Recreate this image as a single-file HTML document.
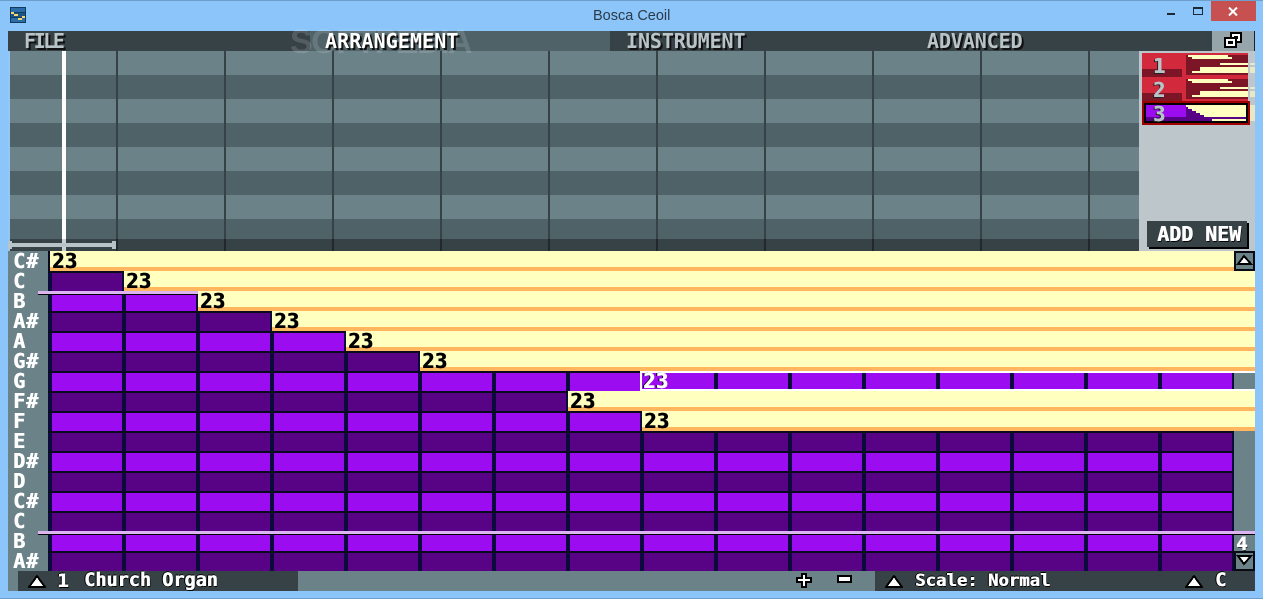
<!DOCTYPE html>
<html>
<head>
<meta charset="utf-8">
<title>Bosca Ceoil</title>
<style>
html,body{margin:0;padding:0;width:1263px;height:599px;overflow:hidden;background:#8bc5fa}
div,span,svg{position:absolute;display:block}
#bt{left:0;top:0;width:1263px;height:1px;background:#6e9fcc}
#bb{left:0;top:598px;width:1263px;height:1px;background:#6e9fcc}
#ttl{left:593px;top:7px;font:14.5px/18px "Liberation Sans",sans-serif;color:#2b3a48;white-space:nowrap}
.d{background:#374247}.l{background:#6b8289}
.t{font-family:"DejaVu Sans Mono","Liberation Mono",monospace;font-weight:bold;white-space:nowrap;line-height:20px}
.m{top:31px;font-size:20px;color:#b9c4c9;text-shadow:2px 2px 0 #111}
.k{left:13px;font-size:20px;color:#fff;letter-spacing:1px;text-shadow:.6px 0 0 #fff}
.n{font-size:20px;color:#000;letter-spacing:.6px;text-shadow:1px 0 0 #000}
.v{width:2px;top:51px;height:200px;background:linear-gradient(#374247 0 188px,#22282b 188px)}
.r{left:48px;width:1186px;height:18px}
.b{background:repeating-linear-gradient(90deg,#0a0a3c 0 4px,#9c0cf0 4px 74px)}
.p{background:repeating-linear-gradient(90deg,#0a0a3c 0 4px,#580385 4px 74px)}
.y{height:16px;background:#ffffbf;border-bottom:4px solid #ffb65f;right:8px}
.w{color:#fff;text-shadow:1px 0 0 #fff,-1px 0 0 #000}
.pb{background:#ffffbf}
.s{left:1250px;width:5px;background:#e8e8c4}
.bw{color:#fff;font-size:18.5px;text-shadow:.6px 0 0 #fff,1px 1px 0 #000,-1px 0 0 #000,0 -1px 0 #000}
.pn{left:1153px;font-size:20px;color:#b9c4c9;text-shadow:.6px 0 0 #b9c4c9,-1px 1px 0 #222}
</style>
</head>
<body>
<div id="bt"></div><div id="bb"></div>
<svg style="left:10px;top:7px" width="16" height="16" viewBox="0 0 16 16" shape-rendering="crispEdges"><rect width="16" height="16" fill="#123a5c"/><rect x="1" y="1" width="14" height="4" fill="#2a6da8"/><rect x="1" y="6" width="14" height="4" fill="#1d5587"/><rect x="1" y="11" width="14" height="4" fill="#2a6da8"/><rect x="1" y="5" width="3" height="2" fill="#f5d76e"/><rect x="4" y="7" width="4" height="2" fill="#f5d76e"/><rect x="8" y="11" width="4" height="2" fill="#f5d76e"/><rect x="12" y="9" width="3" height="2" fill="#f5d76e"/></svg>
<div id="ttl">Bosca Ceoil</div>
<div style="left:1167px;top:13px;width:8px;height:2px;background:#1c2a38"></div>
<div style="left:1193px;top:7px;width:8px;height:5px;border:1px solid #1c2a38;border-top-width:2px"></div>
<div style="left:1211px;top:1px;width:45px;height:20px;background:#c75050"></div>
<svg style="left:1228px;top:7px" width="10" height="9" viewBox="0 0 10 9"><path d="M1 0.5L9 8.5M9 0.5L1 8.5" stroke="#fff" stroke-width="2" fill="none"/></svg>

<div class="d" style="left:8px;top:31px;width:1247px;height:20px"></div>
<div style="left:310px;top:31px;width:300px;height:20px;background:#4f6268"></div>
<div style="left:1212px;top:31px;width:42px;height:20px;background:#96a5a9"></div>
<div style="left:1254px;top:31px;width:1px;height:20px;background:#222"></div>
<svg style="left:1224px;top:32px" width="18" height="16" viewBox="0 0 18 16" shape-rendering="crispEdges"><rect x="6" y="0" width="12" height="11" fill="#000"/><rect x="8" y="2" width="8" height="7" fill="#fff"/><rect x="10" y="4" width="4" height="3" fill="#000"/><rect x="0" y="5" width="13" height="11" fill="#000"/><rect x="2" y="7" width="9" height="7" fill="#fff"/><rect x="4" y="9" width="5" height="3" fill="#000"/></svg>

<div style="left:10px;top:51px;width:1129px;height:200px;background:repeating-linear-gradient(#6b8289 0 24px,#4f6268 24px 48px)"></div>
<div style="left:10px;top:239px;width:1129px;height:12px;background:#374247"></div>
<div style="left:8px;top:51px;width:2px;height:200px;background:#93c8f6"></div>
<div class="v" style="left:116px"></div><div class="v" style="left:224px"></div><div class="v" style="left:332px"></div><div class="v" style="left:440px"></div><div class="v" style="left:548px"></div><div class="v" style="left:656px"></div><div class="v" style="left:764px"></div><div class="v" style="left:872px"></div><div class="v" style="left:980px"></div><div class="v" style="left:1088px"></div>
<div style="left:62px;top:51px;width:4px;height:200px;background:linear-gradient(#fff 0 188px,#c7d0d4 188px)"></div>
<div style="left:8px;top:243px;width:108px;height:4px;background:#b9c4c9"></div>
<div style="left:8px;top:241px;width:4px;height:8px;background:#b9c4c9"></div>
<div style="left:112px;top:241px;width:4px;height:8px;background:#b9c4c9"></div>

<div style="left:290px;top:25px;font:bold 34px/34px 'Liberation Sans',sans-serif;color:rgba(255,255,255,.14);white-space:nowrap;letter-spacing:-1.5px">SOFTPEDIA</div>
<div class="t m" style="left:24px;letter-spacing:-2.4px">FILE</div>
<div class="t m" style="left:325px;color:#fff;letter-spacing:.1px">ARRANGEMENT</div>
<div class="t m" style="left:626px;letter-spacing:-.1px">INSTRUMENT</div>
<div class="t m" style="left:927px;letter-spacing:-.1px">ADVANCED</div>

<div style="left:1139px;top:51px;width:116px;height:200px;background:#bcc6cb"></div>
<div class="s" style="top:63px;height:2px"></div><div class="s" style="top:67px;height:6px"></div><div class="s" style="top:87px;height:2px"></div><div class="s" style="top:91px;height:6px"></div><div class="s" style="top:105px;height:16px"></div>

<div style="left:1142px;top:53px;width:106px;height:48px;background:#d22a3c"></div>
<div style="left:1142px;top:69px;width:40px;height:8px;background:#7c1525"></div>
<div style="left:1142px;top:93px;width:40px;height:8px;background:#7c1525"></div>
<div style="left:1186px;top:55px;width:62px;height:20px;background:#7c1525"></div>
<div style="left:1186px;top:79px;width:62px;height:20px;background:#7c1525"></div>
<div class="pb" style="left:1188px;top:55px;width:40px;height:2px"></div><div class="pb" style="left:1192px;top:57px;width:40px;height:2px"></div><div class="pb" style="left:1220px;top:63px;width:28px;height:2px"></div><div class="pb" style="left:1200px;top:67px;width:48px;height:4px"></div><div class="pb" style="left:1192px;top:71px;width:56px;height:2px"></div>
<div class="pb" style="left:1188px;top:79px;width:40px;height:2px"></div><div class="pb" style="left:1192px;top:81px;width:40px;height:2px"></div><div class="pb" style="left:1220px;top:87px;width:28px;height:2px"></div><div class="pb" style="left:1200px;top:91px;width:48px;height:4px"></div><div class="pb" style="left:1192px;top:95px;width:56px;height:2px"></div>
<div style="left:1142px;top:101px;width:108px;height:24px;background:#a00000"></div>
<div style="left:1144px;top:103px;width:104px;height:20px;background:#000"></div>
<div style="left:1146px;top:105px;width:100px;height:16px;background:#9c0cf0"></div>
<div style="left:1146px;top:117px;width:40px;height:4px;background:#580385"></div>
<svg style="left:1186px;top:105px" width="60" height="16" viewBox="0 0 60 16" shape-rendering="crispEdges"><rect width="60" height="16" fill="#ffffbf"/><path d="M0 2H2V4H6V6H10V8H14V10H18V12H60V14H26V16H0Z" fill="#580385"/></svg>
<div class="t pn" style="top:56px">1</div>
<div class="t pn" style="top:80px">2</div>
<div class="t pn" style="top:104px">3</div>

<div style="left:1149px;top:223px;width:100px;height:26px;background:#000"></div>
<div class="d" style="left:1147px;top:221px;width:100px;height:26px"></div>
<div class="t" style="left:1157px;top:224px;font-size:20px;color:#fff;text-shadow:.6px 0 0 #fff,1px 1px 0 #000;letter-spacing:-.05px">ADD NEW</div>

<div class="l" style="left:8px;top:251px;width:40px;height:320px"></div>
<div class="l" style="left:1234px;top:251px;width:21px;height:300px"></div>
<div style="left:48px;top:251px;width:1186px;height:320px;background:#0a0a1e"></div>
<div class="r p" style="top:273px"></div><div class="r b" style="top:293px"></div><div class="r p" style="top:313px"></div><div class="r b" style="top:333px"></div><div class="r p" style="top:353px"></div><div class="r b" style="top:373px"></div><div class="r p" style="top:393px"></div><div class="r b" style="top:413px"></div><div class="r p" style="top:433px"></div><div class="r b" style="top:453px"></div><div class="r p" style="top:473px"></div><div class="r b" style="top:493px"></div><div class="r p" style="top:513px"></div><div class="r b" style="top:533px"></div><div class="r p" style="top:553px"></div>

<div style="left:38px;top:291px;width:160px;height:3px;background:#dcb4f2"></div>
<div style="left:38px;top:294px;width:160px;height:1px;background:#000"></div>
<div style="left:38px;top:531px;width:1217px;height:3px;background:#dcb4f2"></div>
<div style="left:38px;top:534px;width:1217px;height:1px;background:#000"></div>

<div class="y" style="left:50px;top:251px"></div>
<div class="y" style="left:124px;top:271px"></div>
<div class="y" style="left:198px;top:291px"></div>
<div class="y" style="left:272px;top:311px"></div>
<div class="y" style="left:346px;top:331px"></div>
<div class="y" style="left:420px;top:351px"></div>
<div class="y" style="left:568px;top:391px"></div>
<div class="y" style="left:642px;top:411px"></div>
<div style="left:640px;top:371px;width:615px;height:2px;background:#fff"></div>
<div style="left:640px;top:389px;width:615px;height:2px;background:#fff"></div>
<div style="left:640px;top:371px;width:2px;height:20px;background:#fff"></div>
<div style="left:642px;top:373px;width:72px;height:16px;background:#9c0cf0"></div>
<div class="l" style="left:1234px;top:373px;width:21px;height:16px"></div>

<div class="t n" style="left:52px;top:251px">23</div>
<div class="t n" style="left:126px;top:271px">23</div>
<div class="t n" style="left:200px;top:291px">23</div>
<div class="t n" style="left:274px;top:311px">23</div>
<div class="t n" style="left:348px;top:331px">23</div>
<div class="t n" style="left:422px;top:351px">23</div>
<div class="t n w" style="left:643px;top:371px">23</div>
<div class="t n" style="left:570px;top:391px">23</div>
<div class="t n" style="left:644px;top:411px">23</div>

<div class="t k" style="top:251px">C#</div><div class="t k" style="top:271px">C</div><div class="t k" style="top:291px">B</div><div class="t k" style="top:311px">A#</div><div class="t k" style="top:331px">A</div><div class="t k" style="top:351px">G#</div><div class="t k" style="top:371px">G</div><div class="t k" style="top:391px">F#</div><div class="t k" style="top:411px">F</div><div class="t k" style="top:431px">E</div><div class="t k" style="top:451px">D#</div><div class="t k" style="top:471px">D</div><div class="t k" style="top:491px">C#</div><div class="t k" style="top:511px">C</div><div class="t k" style="top:531px">B</div><div class="t k" style="top:551px">A#</div>

<div style="left:1234px;top:251px;width:17px;height:16px;border:2px solid #0a0a14;background:#6b8289"></div>
<svg style="left:1236px;top:254px" width="17" height="13" viewBox="0 0 17 13" shape-rendering="crispEdges"><path d="M8 2L15 10H2Z" fill="#fff" stroke="#000" stroke-width="2"/></svg>
<div class="t" style="left:1236px;top:534px;font-size:19px;color:#fff;text-shadow:.6px 0 0 #fff,1px 1px 0 #333">4</div>
<div style="left:1234px;top:551px;width:17px;height:16px;border:2px solid #0a0a14;background:#6b8289"></div>
<svg style="left:1236px;top:554px" width="17" height="13" viewBox="0 0 17 13" shape-rendering="crispEdges"><path d="M2 2H15L8 10Z" fill="#fff" stroke="#000" stroke-width="2"/></svg>

<div class="l" style="left:8px;top:571px;width:1247px;height:20px"></div>
<div class="d" style="left:18px;top:571px;width:280px;height:20px"></div>
<div class="d" style="left:875px;top:571px;width:380px;height:20px"></div>
<svg style="left:28px;top:575px" width="18" height="14" viewBox="0 0 18 14" shape-rendering="crispEdges"><path d="M9 1L17 12H1Z" fill="#fff" stroke="#000" stroke-width="2"/></svg>
<div class="t bw" style="left:57px;top:571px;font-size:19px">1</div>
<div class="t bw" style="left:84px;top:571px">Church Organ</div>
<svg style="left:796px;top:573px" width="16" height="15" viewBox="0 0 16 15" shape-rendering="crispEdges"><path d="M5 0H11V4H16V10H11V15H5V10H0V4H5Z" fill="#000"/><path d="M7 2H9V6H14V8H9V13H7V8H2V6H7Z" fill="#fff"/></svg>
<svg style="left:837px;top:575px" width="15" height="10" viewBox="0 0 15 10" shape-rendering="crispEdges"><rect width="15" height="8" fill="#000"/><rect x="2" y="2" width="11" height="4" fill="#fff"/></svg>
<svg style="left:885px;top:575px" width="18" height="14" viewBox="0 0 18 14" shape-rendering="crispEdges"><path d="M9 1L17 12H1Z" fill="#fff" stroke="#000" stroke-width="2"/></svg>
<div class="t bw" style="left:915px;top:571px;font-size:17.3px">Scale: Normal</div>
<svg style="left:1185px;top:575px" width="18" height="14" viewBox="0 0 18 14" shape-rendering="crispEdges"><path d="M9 1L17 12H1Z" fill="#fff" stroke="#000" stroke-width="2"/></svg>
<div class="t bw" style="left:1215px;top:571px">C</div>
</body>
</html>
